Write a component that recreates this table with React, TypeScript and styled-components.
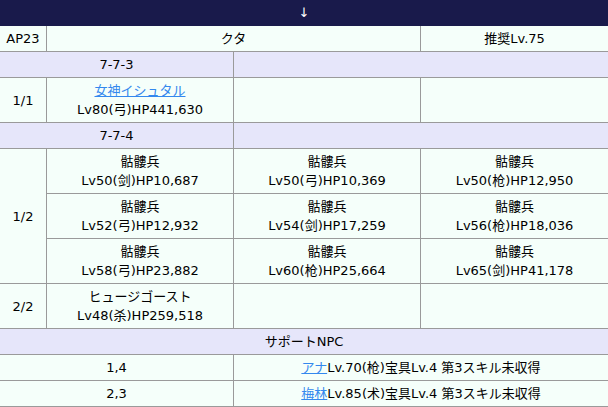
import React from "react";
import styled, { createGlobalStyle } from "styled-components";

const GlobalStyle = createGlobalStyle`
  html, body { margin: 0; padding: 0; background: #ffffff; }
  body {
    font-family: "DejaVu Sans", "Noto Sans CJK JP", sans-serif;
    font-size: 13px;
    color: #000000;
    overflow: hidden;
  }
`;

const Frame = styled.div`
  width: 609px;
  margin-left: -1px;
`;

const Table = styled.table`
  width: 609px;
  border-collapse: collapse;
  table-layout: fixed;
`;

const TitleCell = styled.th`
  background: #191a4b;
  color: #ffffff;
  border: 1px solid #191a4b;
  font-weight: normal;
  line-height: 19px;
  padding: 2px 0 3px;
  text-align: center;
`;

type Tone = "mint" | "lavender";

const Cell = styled.td<{ $tone?: Tone }>`
  background: ${(p) => (p.$tone === "lavender" ? "#e6e6fa" : "#f5fffa")};
  border: 1px solid #9a9a9a;
  line-height: 19px;
  padding: 3px 2px;
  text-align: center;
  vertical-align: middle;
  white-space: nowrap;
`;

const Link = styled.a`
  color: #3388ee;
  text-decoration: underline;
`;

const Line = styled.div``;

type Enemy = { name: React.ReactNode; stats: string };

const EnemyCell: React.FC<{ enemy?: Enemy }> = ({ enemy }) => (
  <Cell>
    {enemy && (
      <>
        <Line>{enemy.name}</Line>
        <Line>{enemy.stats}</Line>
      </>
    )}
  </Cell>
);

const skeleton = "骷髏兵";

const wave12: Enemy[][] = [
  [
    { name: skeleton, stats: "Lv50(剑)HP10,687" },
    { name: skeleton, stats: "Lv50(弓)HP10,369" },
    { name: skeleton, stats: "Lv50(枪)HP12,950" },
  ],
  [
    { name: skeleton, stats: "Lv52(弓)HP12,932" },
    { name: skeleton, stats: "Lv54(剑)HP17,259" },
    { name: skeleton, stats: "Lv56(枪)HP18,036" },
  ],
  [
    { name: skeleton, stats: "Lv58(弓)HP23,882" },
    { name: skeleton, stats: "Lv60(枪)HP25,664" },
    { name: skeleton, stats: "Lv65(剑)HP41,178" },
  ],
];

export default function App() {
  return (
    <Frame>
      <GlobalStyle />
      <Table>
        <colgroup>
          <col style={{ width: 47 }} />
          <col style={{ width: 187 }} />
          <col style={{ width: 187 }} />
          <col style={{ width: 188 }} />
        </colgroup>
        <tbody>
          <tr>
            <TitleCell colSpan={4}>↓</TitleCell>
          </tr>
          <tr>
            <Cell>AP23</Cell>
            <Cell colSpan={2}>クタ</Cell>
            <Cell>推奨Lv.75</Cell>
          </tr>
          <tr>
            <Cell $tone="lavender" colSpan={2}>7-7-3</Cell>
            <Cell $tone="lavender" colSpan={2} />
          </tr>
          <tr>
            <Cell>1/1</Cell>
            <EnemyCell
              enemy={{ name: <Link href="#">女神イシュタル</Link>, stats: "Lv80(弓)HP441,630" }}
            />
            <EnemyCell />
            <EnemyCell />
          </tr>
          <tr>
            <Cell $tone="lavender" colSpan={2}>7-7-4</Cell>
            <Cell $tone="lavender" colSpan={2} />
          </tr>
          {wave12.map((row, i) => (
            <tr key={i}>
              {i === 0 && <Cell rowSpan={3}>1/2</Cell>}
              {row.map((e, j) => (
                <EnemyCell key={j} enemy={e} />
              ))}
            </tr>
          ))}
          <tr>
            <Cell>2/2</Cell>
            <EnemyCell enemy={{ name: "ヒュージゴースト", stats: "Lv48(杀)HP259,518" }} />
            <EnemyCell />
            <EnemyCell />
          </tr>
          <tr>
            <Cell $tone="lavender" colSpan={4}>サポートNPC</Cell>
          </tr>
          <tr>
            <Cell colSpan={2}>1,4</Cell>
            <Cell colSpan={2}>
              <Link href="#">アナ</Link>Lv.70(枪)宝具Lv.4 第3スキル未収得
            </Cell>
          </tr>
          <tr>
            <Cell colSpan={2}>2,3</Cell>
            <Cell colSpan={2}>
              <Link href="#">梅林</Link>Lv.85(术)宝具Lv.4 第3スキル未収得
            </Cell>
          </tr>
        </tbody>
      </Table>
    </Frame>
  );
}
